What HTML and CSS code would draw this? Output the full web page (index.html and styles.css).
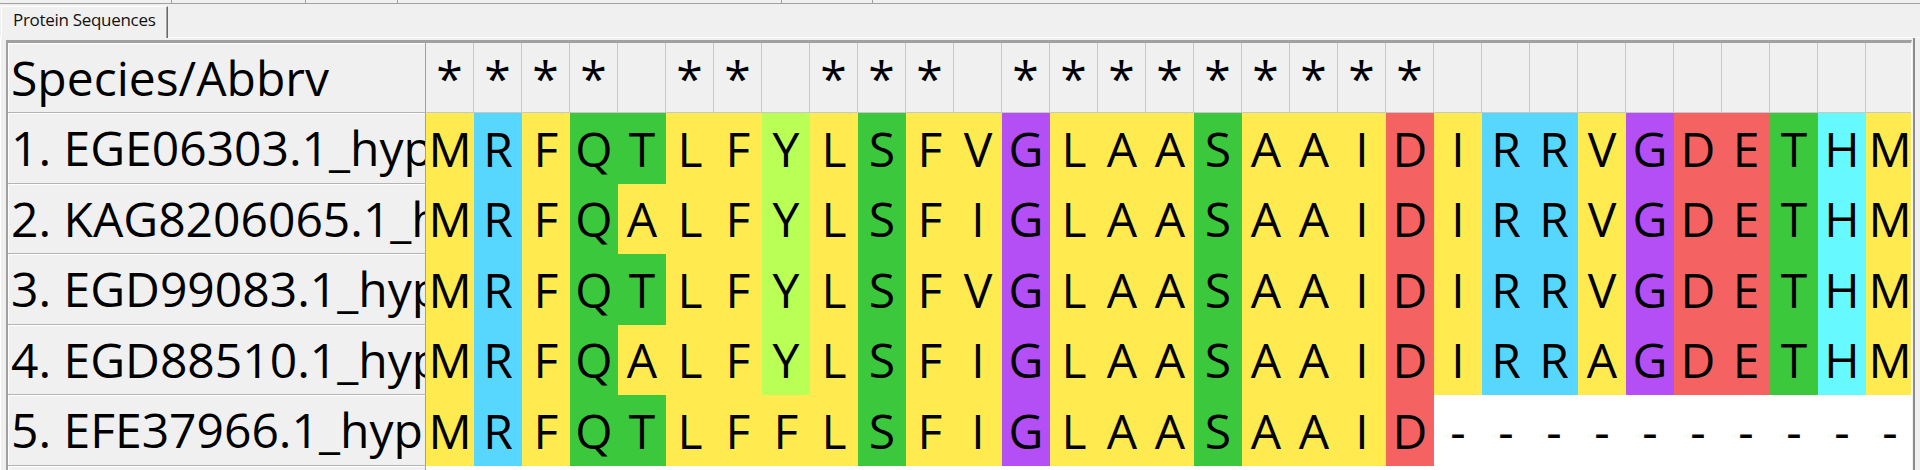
FILE: index.html
```html
<!DOCTYPE html>
<html lang="en">
<head>
<meta charset="utf-8">
<title>Protein Sequences</title>
<link rel="stylesheet" href="styles.css">
</head>
<body>
<div class="topbar"><span></span><span></span><span></span><span></span><span></span><span class="last"></span></div>
<div class="tabrow"><div class="tabgap"></div><div class="tab">Protein Sequences</div><div class="tabfill"></div></div>
<div class="panel">
<div class="grid">
<div class="hlab">Species/Abbrv</div>
<div class="hd">*</div><div class="hd">*</div><div class="hd">*</div><div class="hd">*</div><div class="hd"></div><div class="hd">*</div><div class="hd">*</div><div class="hd"></div><div class="hd">*</div><div class="hd">*</div><div class="hd">*</div><div class="hd"></div><div class="hd">*</div><div class="hd">*</div><div class="hd">*</div><div class="hd">*</div><div class="hd">*</div><div class="hd">*</div><div class="hd">*</div><div class="hd">*</div><div class="hd">*</div><div class="hd"></div><div class="hd"></div><div class="hd"></div><div class="hd"></div><div class="hd"></div><div class="hd"></div><div class="hd"></div><div class="hd"></div><div class="hd"></div><div class="hd"></div>

<div class="lab">1. EGE06303.1_hypothetical protein</div>
<div class="s y">M</div><div class="s b">R</div><div class="s y">F</div><div class="s g">Q</div><div class="s g">T</div><div class="s y">L</div><div class="s y">F</div><div class="s l">Y</div><div class="s y">L</div><div class="s g">S</div><div class="s y">F</div><div class="s y">V</div><div class="s p">G</div><div class="s y">L</div><div class="s y">A</div><div class="s y">A</div><div class="s g">S</div><div class="s y">A</div><div class="s y">A</div><div class="s y">I</div><div class="s r">D</div><div class="s y">I</div><div class="s b">R</div><div class="s b">R</div><div class="s y">V</div><div class="s p">G</div><div class="s r">D</div><div class="s r">E</div><div class="s g">T</div><div class="s c">H</div><div class="s y">M</div>

<div class="lab">2. KAG8206065.1_hypothetical protein</div>
<div class="s y">M</div><div class="s b">R</div><div class="s y">F</div><div class="s g">Q</div><div class="s y">A</div><div class="s y">L</div><div class="s y">F</div><div class="s l">Y</div><div class="s y">L</div><div class="s g">S</div><div class="s y">F</div><div class="s y">I</div><div class="s p">G</div><div class="s y">L</div><div class="s y">A</div><div class="s y">A</div><div class="s g">S</div><div class="s y">A</div><div class="s y">A</div><div class="s y">I</div><div class="s r">D</div><div class="s y">I</div><div class="s b">R</div><div class="s b">R</div><div class="s y">V</div><div class="s p">G</div><div class="s r">D</div><div class="s r">E</div><div class="s g">T</div><div class="s c">H</div><div class="s y">M</div>

<div class="lab">3. EGD99083.1_hypothetical protein</div>
<div class="s y">M</div><div class="s b">R</div><div class="s y">F</div><div class="s g">Q</div><div class="s g">T</div><div class="s y">L</div><div class="s y">F</div><div class="s l">Y</div><div class="s y">L</div><div class="s g">S</div><div class="s y">F</div><div class="s y">V</div><div class="s p">G</div><div class="s y">L</div><div class="s y">A</div><div class="s y">A</div><div class="s g">S</div><div class="s y">A</div><div class="s y">A</div><div class="s y">I</div><div class="s r">D</div><div class="s y">I</div><div class="s b">R</div><div class="s b">R</div><div class="s y">V</div><div class="s p">G</div><div class="s r">D</div><div class="s r">E</div><div class="s g">T</div><div class="s c">H</div><div class="s y">M</div>

<div class="lab">4. EGD88510.1_hypothetical protein</div>
<div class="s y">M</div><div class="s b">R</div><div class="s y">F</div><div class="s g">Q</div><div class="s y">A</div><div class="s y">L</div><div class="s y">F</div><div class="s l">Y</div><div class="s y">L</div><div class="s g">S</div><div class="s y">F</div><div class="s y">I</div><div class="s p">G</div><div class="s y">L</div><div class="s y">A</div><div class="s y">A</div><div class="s g">S</div><div class="s y">A</div><div class="s y">A</div><div class="s y">I</div><div class="s r">D</div><div class="s y">I</div><div class="s b">R</div><div class="s b">R</div><div class="s y">A</div><div class="s p">G</div><div class="s r">D</div><div class="s r">E</div><div class="s g">T</div><div class="s c">H</div><div class="s y">M</div>

<div class="lab">5. EFE37966.1_hypothetical protein</div>
<div class="s y">M</div><div class="s b">R</div><div class="s y">F</div><div class="s g">Q</div><div class="s g">T</div><div class="s y">L</div><div class="s y">F</div><div class="s y">F</div><div class="s y">L</div><div class="s g">S</div><div class="s y">F</div><div class="s y">I</div><div class="s p">G</div><div class="s y">L</div><div class="s y">A</div><div class="s y">A</div><div class="s g">S</div><div class="s y">A</div><div class="s y">A</div><div class="s y">I</div><div class="s r">D</div><div class="s w">-</div><div class="s w">-</div><div class="s w">-</div><div class="s w">-</div><div class="s w">-</div><div class="s w">-</div><div class="s w">-</div><div class="s w">-</div><div class="s w">-</div><div class="s w">-</div>

<div class="labend"></div>
</div>
</div>
</body>
</html>
```

FILE: styles.css
```css
html, body {
  margin: 0;
  padding: 0;
}
* {
  box-sizing: border-box;
}
body {
  width: 1920px;
  height: 470px;
  overflow: hidden;
  background: #f0f0f0;
  font-family: "Open Sans", "Noto Sans", sans-serif;
  color: #000;
}

/* strip of a table scrolled out above */
.topbar {
  display: grid;
  grid-template-columns: 172px 134px 92px 384px 91px 1fr;
  height: 4px;
  border-bottom: 1px solid #a0a0a0;
}
.topbar span {
  border-right: 1px solid #a0a0a0;
}
.topbar span.last {
  border-right: none;
}

/* tab strip */
.tabrow {
  display: flex;
  height: 34px;
}
.tabgap {
  width: 1px;
  border-bottom: 1px solid #fff;
}
.tab {
  width: 167px;
  margin-top: 2px;
  height: 32px;
  border-left: 1px solid #fff;
  border-top: 1px solid #fff;
  border-right: 1px solid #696969;
  box-shadow: inset -1px 0 0 #a0a0a0;
  font-size: 17px;
  letter-spacing: -0.3px;
  line-height: 24px;
  padding: 1px 0 0 11px;
  white-space: nowrap;
  color: #111;
}
.tabfill {
  flex: 1;
  border-bottom: 1px solid #fff;
}

/* tab page */
.panel {
  width: 1915px;
  height: 432px;
  border-left: 1px solid #fff;
  border-right: 2px solid #8c8c8c;
  padding: 2px 1px 0 5px;
}

.grid {
  width: 1906px;
  height: 430px;
  border-top: 3px solid #a0a0a0;
  border-left: 2px solid #a0a0a0;
  border-right: 1px solid #fff;
  background: #fff;
  overflow: hidden;
  display: grid;
  grid-template-columns: 418px repeat(31, 48px);
  grid-template-rows: 70px repeat(5, 70.5px) 1fr;
  font-size: 48px;
}

.hlab,
.lab {
  background: #f0f0f0;
  border-right: 1px solid #a0a0a0;
  border-bottom: 1px solid #b4b4b4;
  box-shadow: inset 1px 1px 0 #fff;
  padding-left: 3px;
  white-space: nowrap;
  overflow: hidden;
  display: flex;
  align-items: center;
}
.labend {
  background: #f0f0f0;
  border-right: 1px solid #a0a0a0;
  box-shadow: inset 1px 1px 0 #fff;
}

.hd {
  background: #f0f0f0;
  border-right: 1px solid #c8c8c8;
  border-bottom: 1px solid #c8c8c8;
  display: flex;
  align-items: center;
  justify-content: center;
}

.s {
  display: flex;
  align-items: center;
  justify-content: center;
}

.y { background: #ffeb4f; }
.b { background: #57d7fe; }
.g { background: #3cc83c; }
.l { background: #b9ff55; }
.p { background: #b44ef5; }
.r { background: #f46262; }
.c { background: #66f9ff; }
.w { background: #fff; }
```
